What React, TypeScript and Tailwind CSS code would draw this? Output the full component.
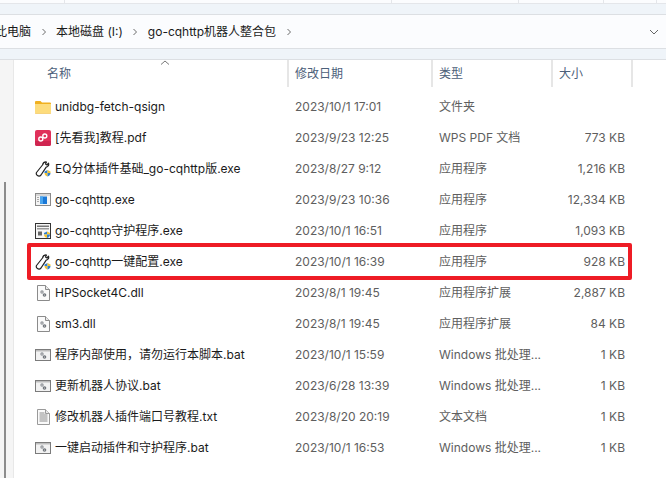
const FONT = "font-['Inter','Noto_Sans_CJK_SC',sans-serif]";

function FolderIcon() {
  return (
    <svg width="16" height="14" viewBox="0 0 16 14">
      <path d="M0 2a1 1 0 0 1 1-1h4.500l1.500 1.500h8a1 1 0 0 1 1 1V5H0z" fill="#f0b020" />
      <path d="M0 4h16v8.500a1 1 0 0 1-1 1H1a1 1 0 0 1-1-1z" fill="#fddc7c" />
      <path d="M0 13h16v.5H0z" fill="#eeb83e" />
    </svg>
  );
}

function PdfIcon() {
  return (
    <svg width="16" height="16" viewBox="0 0 16 16">
      <rect width="16" height="16" rx="2" fill="#e0305a" />
      <path d="M0 11h16v3a2 2 0 0 1-2 2H2a2 2 0 0 1-2-2z" fill="#cf2550" />
      <circle cx="9.800" cy="6" r="2" fill="none" stroke="#fff" strokeWidth="1.400" />
      <circle cx="5.800" cy="9" r="2" fill="none" stroke="#fff" strokeWidth="1.400" />
    </svg>
  );
}

function Shield({ x, y }: { x: number; y: number }) {
  return (
    <g transform={`translate(${x} ${y})`}>
      <path d="M0 1.500 3 0v3H0z" fill="#2f7fd0" />
      <path d="M3 0l3 1.500V3H3z" fill="#f4c430" />
      <path d="M0 3h3v3.500C1.200 6 0 5 0 3z" fill="#f4c430" />
      <path d="M3 3h3c0 2-1.200 3-3 3.500z" fill="#2f7fd0" />
    </g>
  );
}

function WrenchIcon() {
  return (
    <svg width="16" height="16" viewBox="0 0 16 16">
      <path d="M1.500 11.500 7.500 4C8 2 9.500.8 11.500 1L10.500 3l1.500 1 1.500-1.800c.6 2-.3 3.600-2.300 4L6 14c-1 1.200-2.700 1.200-3.800.3-.9-.8-1.200-1.800-.7-2.800z" fill="#fff" stroke="#222" strokeWidth="1.200" strokeLinejoin="round" />
      <Shield x={9.500} y={9} />
    </svg>
  );
}

function AppIcon() {
  return (
    <svg width="16" height="13" viewBox="0 0 16 13">
      <rect x="0.500" y="0.500" width="15" height="12" fill="#f4f4f4" stroke="#8a8a8a" />
      <rect x="1" y="1" width="14" height="2" fill="#d6d6d6" />
      <rect x="5" y="3.500" width="7" height="7.500" fill="#1a78d6" />
      <rect x="5" y="3.500" width="3" height="7.500" fill="#4aa5ee" />
      <rect x="2" y="4" width="2" height="1" fill="#aaa" />
      <rect x="2" y="6" width="2" height="1" fill="#aaa" />
      <rect x="2" y="8" width="2" height="1" fill="#aaa" />
    </svg>
  );
}

function GuardIcon() {
  return (
    <svg width="16" height="16" viewBox="0 0 16 16">
      <rect x="0.500" y="0.500" width="15" height="15" fill="#f6f6f6" stroke="#333" />
      <rect x="2" y="2.500" width="12" height="1.500" fill="#777" />
      <rect x="2" y="5" width="12" height="1.500" fill="#999" />
      <rect x="3" y="8.500" width="4" height="4" fill="#666" />
      <Shield x={9} y={8.500} />
    </svg>
  );
}

function Gears({ x, y }: { x: number; y: number }) {
  return (
    <g transform={`translate(${x} ${y})`}>
      <circle cx="2" cy="2" r="1.700" fill="#8f9398" />
      <circle cx="2" cy="2" r="0.600" fill="#eee" />
      <circle cx="4.500" cy="5" r="1.800" fill="#70757b" />
      <circle cx="4.500" cy="5" r="0.600" fill="#ddd" />
    </g>
  );
}

function DllIcon() {
  return (
    <svg width="13" height="16" viewBox="0 0 13 16">
      <path d="M.5.500h8l4 4v11H.5z" fill="#fafafa" stroke="#8b8b8b" />
      <path d="M8.500.500v4h4" fill="#e8e8e8" stroke="#8b8b8b" />
      <Gears x={3} y={5} />
    </svg>
  );
}

function BatIcon() {
  return (
    <svg width="16" height="12" viewBox="0 0 16 12">
      <rect x="0.500" y="0.500" width="15" height="11" fill="#f2f2f2" stroke="#7b7b7b" />
      <rect x="1" y="1" width="14" height="1.500" fill="#bdbdbd" />
      <Gears x={5} y={3} />
    </svg>
  );
}

function TxtIcon() {
  return (
    <svg width="13" height="16" viewBox="0 0 13 16">
      <path d="M.5.500h8l4 4v11H.5z" fill="#fafafa" stroke="#9a9a9a" />
      <path d="M8.500.500v4h4" fill="#e8e8e8" stroke="#9a9a9a" />
      <path d="M2.500 4h5M2.500 6h8M2.500 8h8M2.500 10h8M2.500 12h8" stroke="#8c8c8c" strokeWidth="1" />
    </svg>
  );
}

const ICONS = {
  folder: <FolderIcon />,
  pdf: <PdfIcon />,
  wrench: <WrenchIcon />,
  app: <AppIcon />,
  guard: <GuardIcon />,
  dll: <DllIcon />,
  bat: <BatIcon />,
  txt: <TxtIcon />,
};

type FileRow = { icon: keyof typeof ICONS; name: string; date: string; type: string; size: string };

const FILES: FileRow[] = [
  { icon: "folder", name: "unidbg-fetch-qsign", date: "2023/10/1 17:01", type: "文件夹", size: "" },
  { icon: "pdf", name: "[先看我]教程.pdf", date: "2023/9/23 12:25", type: "WPS PDF 文档", size: "773 KB" },
  { icon: "wrench", name: "EQ分体插件基础_go-cqhttp版.exe", date: "2023/8/27 9:12", type: "应用程序", size: "1,216 KB" },
  { icon: "app", name: "go-cqhttp.exe", date: "2023/9/23 10:36", type: "应用程序", size: "12,334 KB" },
  { icon: "guard", name: "go-cqhttp守护程序.exe", date: "2023/10/1 16:51", type: "应用程序", size: "1,093 KB" },
  { icon: "wrench", name: "go-cqhttp一键配置.exe", date: "2023/10/1 16:39", type: "应用程序", size: "928 KB" },
  { icon: "dll", name: "HPSocket4C.dll", date: "2023/8/1 19:45", type: "应用程序扩展", size: "2,887 KB" },
  { icon: "dll", name: "sm3.dll", date: "2023/8/1 19:45", type: "应用程序扩展", size: "84 KB" },
  { icon: "bat", name: "程序内部使用，请勿运行本脚本.bat", date: "2023/10/1 15:59", type: "Windows 批处理...", size: "1 KB" },
  { icon: "bat", name: "更新机器人协议.bat", date: "2023/6/28 13:39", type: "Windows 批处理...", size: "1 KB" },
  { icon: "txt", name: "修改机器人插件端口号教程.txt", date: "2023/8/20 20:19", type: "文本文档", size: "1 KB" },
  { icon: "bat", name: "一键启动插件和守护程序.bat", date: "2023/10/1 16:53", type: "Windows 批处理...", size: "1 KB" },
];

function Crumb({ label }: { label: string }) {
  return (
    <div className="flex items-center">
      <span className="whitespace-nowrap">{label}</span>
      <svg width="6" height="8" viewBox="0 0 6 8" className="mx-[9.5px]">
        <path d="M1.500 1 4.500 4 1.500 7" fill="none" stroke="#6b6b6b" strokeWidth="1" />
      </svg>
    </div>
  );
}

function HeaderCell({ label, className }: { label: string; className: string }) {
  return (
    <div className={`flex h-[27px] items-center border-r-2 border-[#e6e6e6] pl-[6px] text-[#4c607a] ${className}`}>
      {label}
    </div>
  );
}

export default function App() {
  return (
    <div className={`h-[478px] w-[666px] overflow-hidden bg-white text-[12px] ${FONT}`}>
      <div className="flex h-[3px] bg-[#fbfcfe]">
        <div className="h-[3px] w-[65px] border-r border-[#e4e6ea]" />
        <div className="h-[3px] w-[327px] border-r border-[#e4e6ea]" />
        <div className="h-[3px] w-[127px] border-r border-[#e4e6ea]" />
        <div className="h-[3px] w-[85px] border-r border-[#e4e6ea]" />
        <div className="h-[3px] w-[53px] border-r border-[#e4e6ea]" />
      </div>
      <div className="h-[11px] border-t border-[#e4e6ea] bg-[#eff4f9]" />

      {/* address bar */}
      <div className="flex h-[35px] items-center justify-between border-y border-[#dcdfe3] bg-[#fbfcfe] text-[#1a1a1a]">
        <div className="-ml-[5px] flex items-center">
          <Crumb label="此电脑" />
          <Crumb label="本地磁盘 (I:)" />
          <Crumb label="go-cqhttp机器人整合包" />
        </div>
        <svg width="10" height="6" viewBox="0 0 10 6" className="mr-[7px]">
          <path d="M1 1 5 5 9 1" fill="none" stroke="#666" strokeWidth="1" />
        </svg>
      </div>
      <div className="h-[11px] border-b border-[#dcdfe3] bg-[#eff4f9]" />

      <div className="flex">
        {/* nav pane */}
        <div className="relative h-[418px] w-[14px] shrink-0 border-r border-[#e8e8e8] bg-[#f5f5f5]">
          <div className="absolute left-[4px] top-[122px] h-[296px] w-[2px] bg-[#8c8c8c]" />
        </div>

        <div className="relative min-w-0 flex-1">
          <svg width="10" height="5" viewBox="0 0 10 5" className="absolute left-[146px] top-0">
            <path d="M1 4.500 5 1 9 4.500" fill="none" stroke="#777" strokeWidth="1" />
          </svg>

          <div className="flex">
            <div className="flex h-[27px] w-[275px] items-center border-r-2 border-[#e6e6e6] pl-[33px] text-[#4c607a]">
              名称
            </div>
            <HeaderCell label="修改日期" className="w-[144px]" />
            <HeaderCell label="类型" className="w-[120px]" />
            <HeaderCell label="大小" className="w-[80px]" />
          </div>

          <div className="pt-[4px]">
            {FILES.map((f) => (
              <div key={f.name} className="flex h-[31px] items-center whitespace-nowrap text-[#5e5e5e]">
                <div className="flex w-[275px] items-center text-[#1a1a1a]">
                  <div className="flex w-[41px] shrink-0 pl-[21px]">
                    <div className="flex w-[16px] justify-center">{ICONS[f.icon]}</div>
                  </div>
                  <span>{f.name}</span>
                </div>
                <div className="w-[144px] pl-[6px]">{f.date}</div>
                <div className="w-[120px] pl-[6px]">{f.type}</div>
                <div className="w-[72px] text-right">{f.size}</div>
              </div>
            ))}
          </div>

          {/* red annotation round the selected row */}
          <div className="absolute left-[13px] top-[183px] h-[37px] w-[605px] rounded-[2px] border-4 border-[#ee1c25]" />
        </div>
      </div>
    </div>
  );
}
